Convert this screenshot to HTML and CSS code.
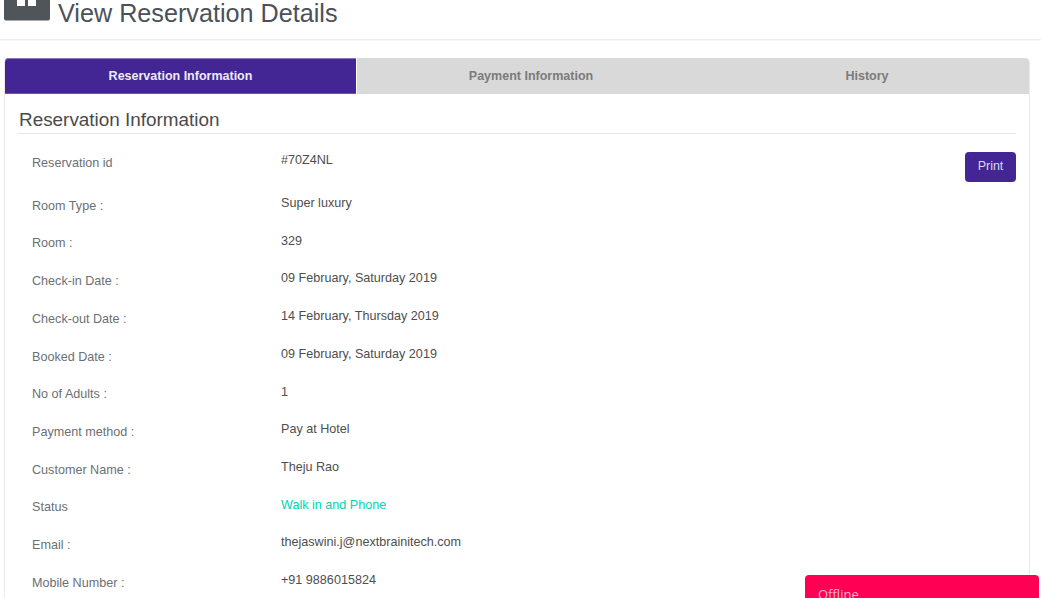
FILE: index.html
```html
<!DOCTYPE html>
<html lang="en">
<head>
<meta charset="utf-8">
<title>View Reservation Details</title>
<link rel="stylesheet" href="styles.css">
</head>
<body>
<header class="page-head">
  <svg class="head-icon" width="46" height="21" viewBox="0 0 46 21" aria-hidden="true">
    <path fill="#50555a" d="M0 0h13v6h8V0h3v6h8V0h14v18.500a2 2 0 0 1-2 2h-42a2 2 0 0 1-2-2z"/>
  </svg>
  <h1 class="page-title">View Reservation Details</h1>
</header>
<main class="panel">
  <nav class="tabs">
    <div class="tab tab-active">Reservation Information</div>
    <div class="tab tab-mid">Payment Information</div>
    <div class="tab tab-last">History</div>
  </nav>
  <section class="panel-body">
    <h2 class="section-title">Reservation Information</h2>
    <div class="rows">
      <div class="row row-first"><span class="label">Reservation id</span><span class="value">#70Z4NL</span><button class="print">Print</button></div>
      <div class="row"><span class="label">Room Type :</span><span class="value">Super luxury</span></div>
      <div class="row"><span class="label">Room :</span><span class="value">329</span></div>
      <div class="row"><span class="label">Check-in Date :</span><span class="value">09 February, Saturday 2019</span></div>
      <div class="row"><span class="label">Check-out Date :</span><span class="value">14 February, Thursday 2019</span></div>
      <div class="row"><span class="label">Booked Date :</span><span class="value">09 February, Saturday 2019</span></div>
      <div class="row"><span class="label">No of Adults :</span><span class="value">1</span></div>
      <div class="row"><span class="label">Payment method :</span><span class="value">Pay at Hotel</span></div>
      <div class="row"><span class="label">Customer Name :</span><span class="value">Theju Rao</span></div>
      <div class="row"><span class="label">Status</span><span class="value value-status">Walk in and Phone</span></div>
      <div class="row"><span class="label">Email :</span><span class="value">thejaswini.j@nextbrainitech.com</span></div>
      <div class="row"><span class="label">Mobile Number :</span><span class="value">+91 9886015824</span></div>
    </div>
  </section>
</main>
<aside class="chat">Offline</aside>
</body>
</html>
```
FILE: styles.css
```css
* { box-sizing: border-box; }
html, body { height: 100%; overflow: hidden; }
body {
  margin: 0;
  background: #fff;
  font-family: "Liberation Sans", Arial, sans-serif;
  color: #4a4a4a;
}
.page-head {
  height: 40px;
  display: flex;
  align-items: flex-start;
  gap: 8px;
  padding-left: 4px;
  background: #fff;
  border-bottom: 1px solid #ececec;
  box-shadow: 0 1px 1px #f6f6f6;
  overflow: hidden;
}
.head-icon { flex: none; display: block; }
.page-title {
  margin: -2px 0 0;
  font-size: 25.200px;
  line-height: 30px;
  font-weight: 400;
  color: #4b5158;
}
.panel {
  margin: 18px 0 0 4px;
  width: 1026px;
  border: 1px solid #e9e9e9;
  border-top: 0;
  border-radius: 5px 5px 0 0;
}
.tabs { display: flex; height: 36px; }
.tab {
  display: flex;
  align-items: center;
  justify-content: center;
  font-size: 12.500px;
  font-weight: 700;
  color: #7b7b7b;
  background: #d9d9d9;
  padding-bottom: 1px;
}
.tab-active {
  width: 351px;
  background: #432694;
  color: #ecebf5;
  margin-right: 1px;
  border-top-left-radius: 4px;
  box-shadow: inset 0 1px 0 #8a78bf, inset 0 -1px 0 #6a52ad;
}
.tab-mid { width: 348px; }
.tab-last { flex: 1; border-top-right-radius: 4px; }
.panel-body { padding: 14px 13px 0 13px; }
.section-title {
  margin: 0;
  height: 26px;
  padding-left: 1px;
  font-size: 18.900px;
  line-height: 24px;
  font-weight: 400;
  color: #4a4a4a;
  border-bottom: 1px solid #e6e6e6;
}
.row {
  display: flex;
  height: 37.700px;
  padding-left: 14px;
  font-size: 12.600px;
  line-height: 16px;
}
.row-first { height: 57.800px; padding-top: 21px; }
.row .label { width: 249px; flex: none; color: #6c6f75; padding-top: 6px; }
.row-first .label { padding-top: 0; }
.row .value { color: #4e4e4e; padding-top: 3.300px; }
.row-first .value { padding-top: 0; margin-top: -3px; }
.value-status.value { color: #00d4b0; }
.print {
  margin-left: auto;
  margin-top: -3px;
  width: 51px;
  height: 30px;
  background: #432694;
  color: #dcd8ee;
  border: 0;
  border-radius: 4px;
  font: 12.500px "Liberation Sans", Arial, sans-serif;
  padding: 0 0 2px;
}
.chat {
  position: fixed;
  left: 805px;
  top: 575px;
  width: 234px;
  height: 40px;
  padding: 10px 13px;
  background: #ff0055;
  color: #ffb3cc;
  border-radius: 4px 4px 0 0;
  font-family: "Open Sans", sans-serif;
  font-size: 13px;
  line-height: 18px;
}
```
